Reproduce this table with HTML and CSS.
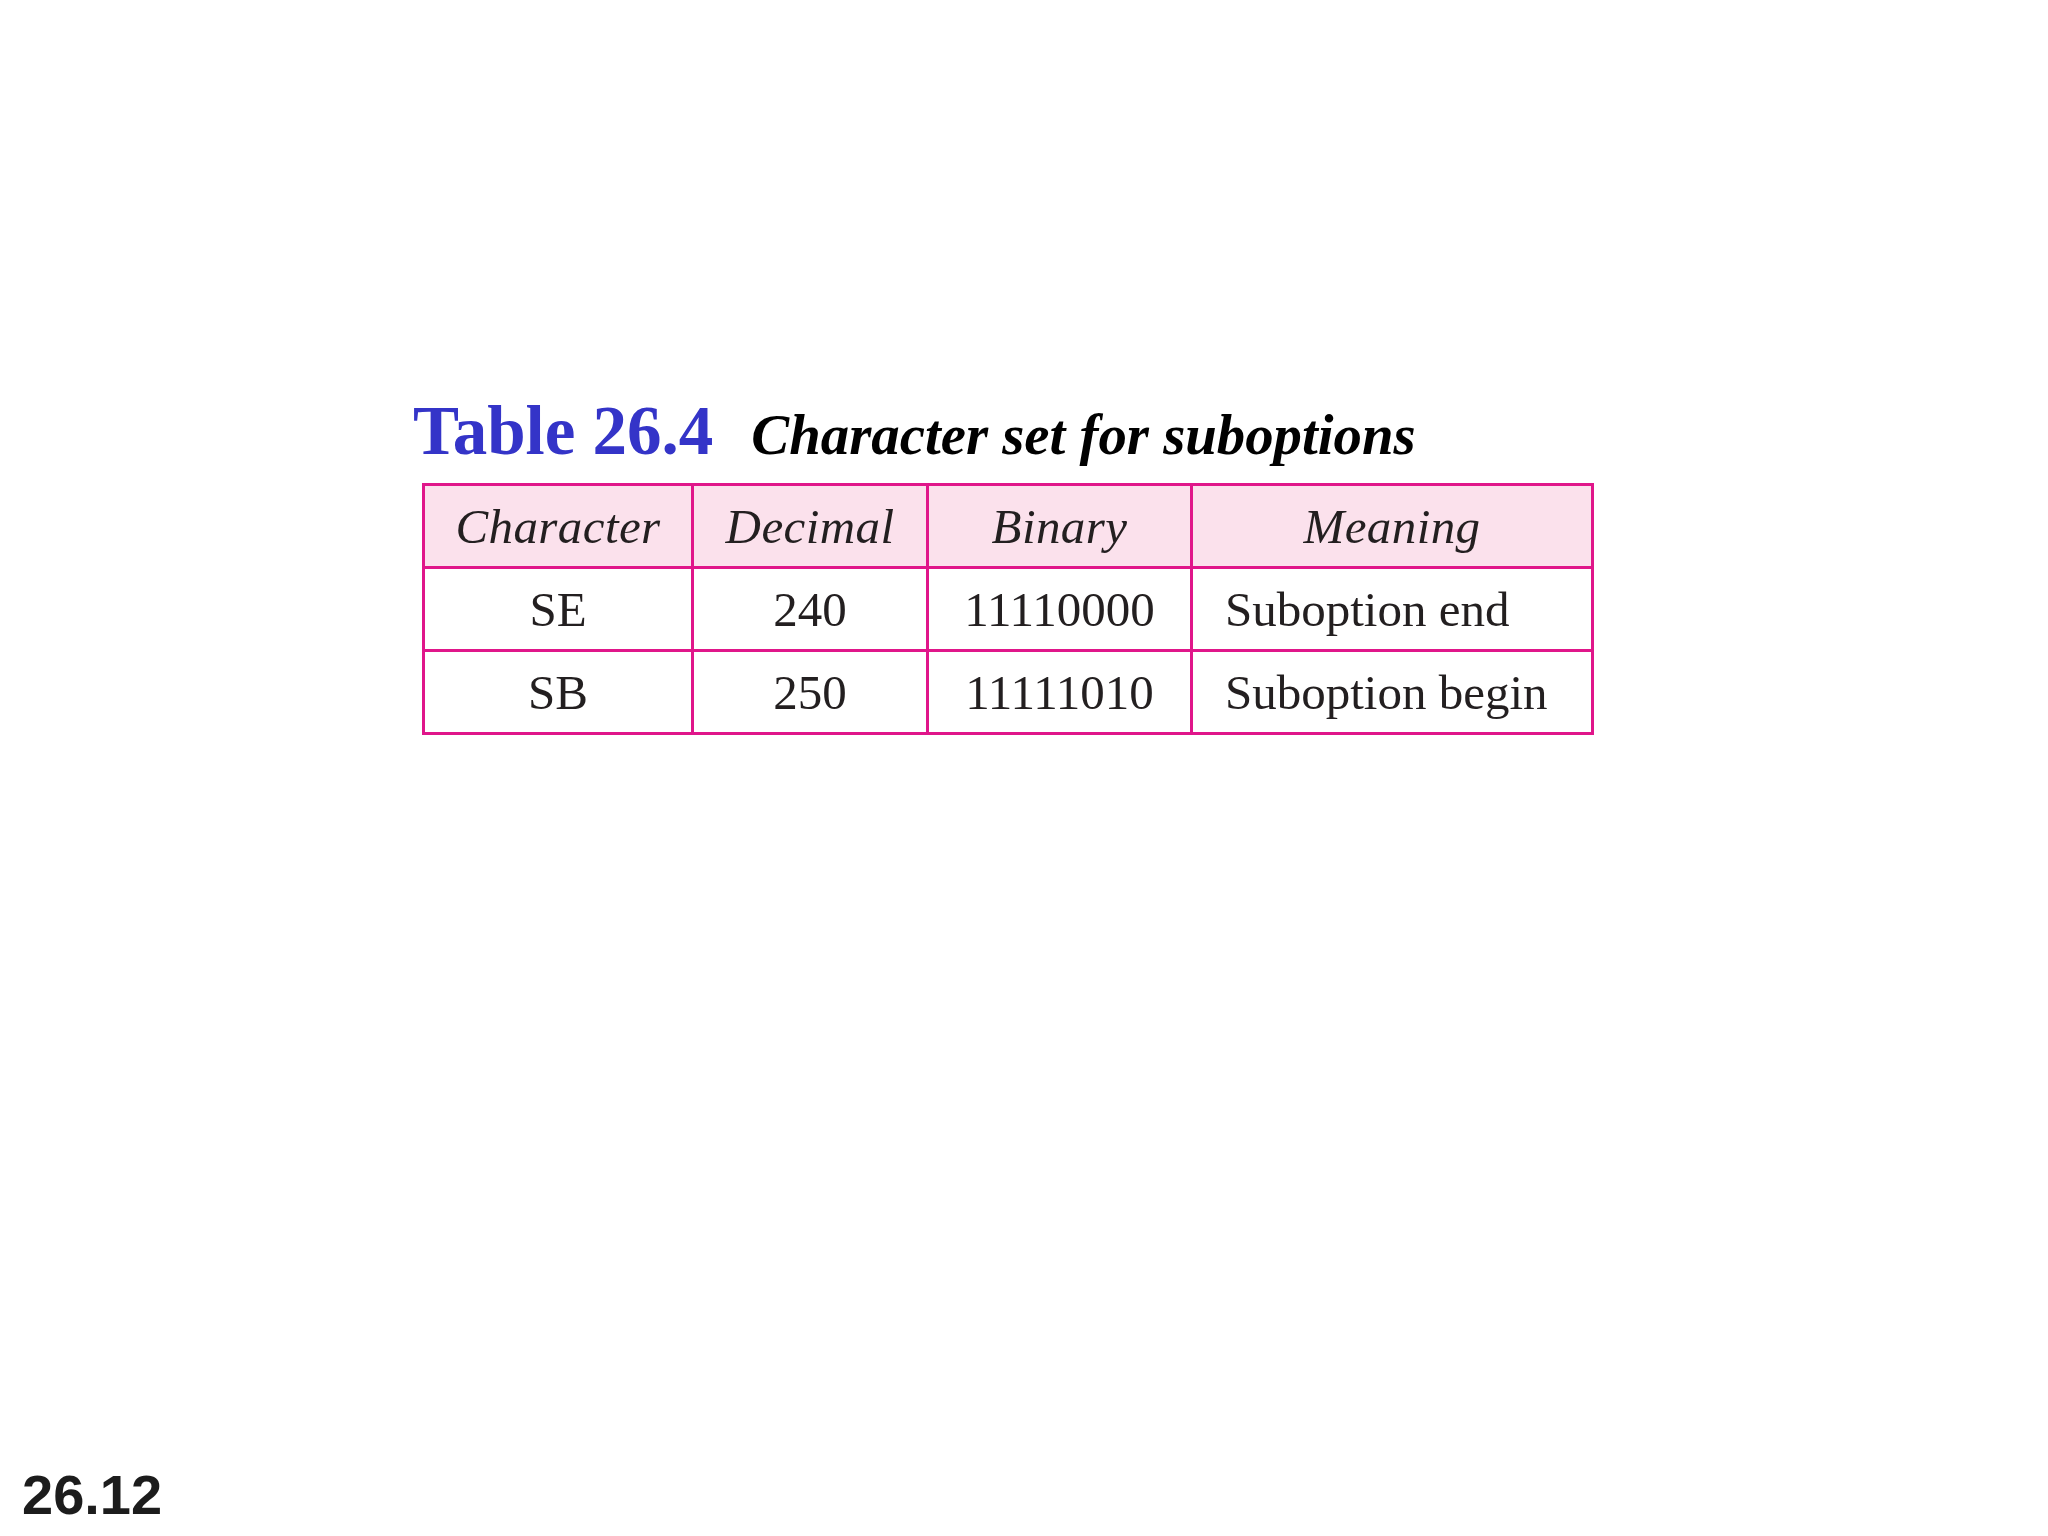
FILE: index.html
```html
<!DOCTYPE html>
<html>
<head>
<meta charset="utf-8">
<link rel="stylesheet" href="styles.css">
</head>
<body>
<div class="slide">
  <div class="content">
    <div class="title"><span class="tnum">Table 26.4</span><span class="tcap">Character set for suboptions</span></div>
    <table class="tbl">
      <colgroup>
        <col class="c1"><col class="c2"><col class="c3"><col class="c4">
      </colgroup>
      <thead>
        <tr><th>Character</th><th>Decimal</th><th>Binary</th><th>Meaning</th></tr>
      </thead>
      <tbody>
        <tr><td>SE</td><td>240</td><td>11110000</td><td class="left">Suboption end</td></tr>
        <tr><td>SB</td><td>250</td><td>11111010</td><td class="left">Suboption begin</td></tr>
      </tbody>
    </table>
  </div>
  <div class="footer">26.12</div>
</div>
</body>
</html>
```
FILE: styles.css
```css
html, body {
  margin: 0;
  padding: 0;
  background: #ffffff;
}
.slide {
  width: 2048px;
  height: 1536px;
  display: flex;
  flex-direction: column;
  justify-content: space-between;
  box-sizing: border-box;
  padding-bottom: 13px;
}
.content {
  padding-top: 397px;
  padding-left: 413px;
}
.title {
  font-family: "Liberation Serif", serif;
  line-height: 68px;
  height: 68px;
  white-space: nowrap;
}
.tnum {
  font-size: 69px;
  font-weight: bold;
  color: #3434c8;
}
.tcap {
  font-size: 56.8px;
  font-weight: bold;
  font-style: italic;
  color: #000;
  margin-left: 38px;
}
.tbl {
  margin-top: 18px;
  margin-left: 9px;
  border-collapse: collapse;
  table-layout: fixed;
  width: 1169px;
  font-family: "Liberation Serif", serif;
  font-size: 49px;
  color: #231f20;
}
.c1 { width: 269px; }
.c2 { width: 235px; }
.c3 { width: 264px; }
.c4 { width: 401px; }
.tbl th, .tbl td {
  border: 3px solid #e0168a;
  height: 80px;
  padding: 0;
  text-align: center;
  vertical-align: middle;
}
.tbl th {
  background: #fbe1ec;
  font-weight: normal;
  font-style: italic;
  letter-spacing: 0.4px;
}
.tbl td.left {
  text-align: left;
  padding-left: 32px;
}
.footer {
  font-family: "Liberation Sans", Arial, sans-serif;
  font-weight: bold;
  font-size: 56px;
  line-height: 56px;
  color: #1c1c1c;
  padding-left: 22px;
}
```
